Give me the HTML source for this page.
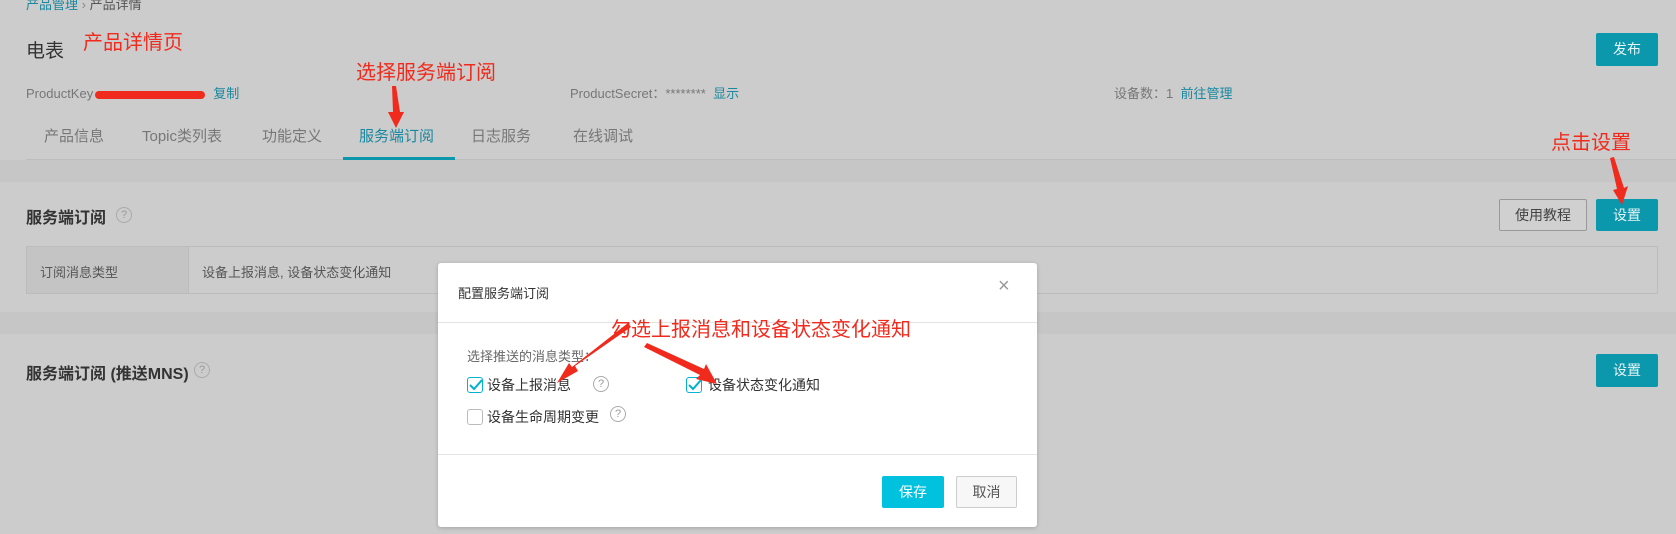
<!DOCTYPE html>
<html><head><meta charset="utf-8"><style>
*{margin:0;padding:0;box-sizing:border-box}
body{width:1676px;height:534px;overflow:hidden;background:#cccccc;font-family:"Liberation Sans","Noto Sans CJK SC",sans-serif;color:#333;position:relative}
.a{position:absolute;white-space:nowrap}
.btn{position:absolute;background:#0b97ac;color:#e6f4f6;font-size:14px;text-align:center;border-radius:2px}
.red{color:#f02b1d;font-size:20px}
.link{color:#1a88a0}
.cb{position:absolute;width:16px;height:16px;border:1px solid #bbb;border-radius:3px;background:#fff}
.cb.on{border-color:#00b3cf}
.q{position:absolute;width:16px;height:16px;border:1px solid #aaa;border-radius:50%;color:#999;font-size:11px;text-align:center;line-height:14px}
.tab{position:absolute;top:125px;font-size:15px;color:#777;white-space:nowrap}
</style></head><body>
<div class="a" style="left:26px;top:-6px;font-size:13px"><span class="link">产品管理</span> <span style="color:#888">›</span> <span style="color:#555">产品详情</span></div>
<div class="a" style="left:0;top:160px;width:1676px;height:22px;background:#c6c6c6"></div>
<div class="a" style="left:0;top:312px;width:1676px;height:22px;background:#c6c6c6"></div>
<div class="a" style="left:26px;top:36px;font-size:19px;color:#333">电表</div>
<div class="a red" style="left:83px;top:26px">产品详情页</div>
<div class="btn" style="left:1596px;top:33px;width:62px;height:33px;line-height:33px">发布</div>
<div class="a" style="left:26px;top:83px;font-size:13px;color:#777">ProductKey<span style="display:inline-block;width:110px;height:8px;background:#f02b1d;border-radius:4px;vertical-align:middle;margin:0 8px 0 2px"></span><span class="link">复制</span></div>
<div class="a" style="left:570px;top:83px;font-size:13px;color:#777">ProductSecret：******** &nbsp;<span class="link">显示</span></div>
<div class="a" style="left:1114px;top:83px;font-size:13px;color:#777">设备数：1 &nbsp;<span class="link">前往管理</span></div>
<div class="a red" style="left:356px;top:56px">选择服务端订阅</div>
<div class="tab" style="left:44px">产品信息</div>
<div class="tab" style="left:142px">Topic类列表</div>
<div class="tab" style="left:262px">功能定义</div>
<div class="tab" style="left:359px;color:#1a88a0">服务端订阅</div>
<div class="tab" style="left:471px">日志服务</div>
<div class="tab" style="left:573px">在线调试</div>
<div class="a" style="left:26px;top:159px;width:1650px;height:1px;background:#bdbdbd"></div>
<div class="a" style="left:343px;top:157px;width:112px;height:3px;background:#0b97ac"></div>
<div class="a red" style="left:1551px;top:126px">点击设置</div>
<div class="a" style="left:26px;top:204px;font-size:16px;font-weight:bold;color:#333">服务端订阅</div>
<div class="q" style="left:116px;top:207px">?</div>
<div class="a" style="left:1499px;top:199px;width:88px;height:32px;border:1px solid #999;border-radius:2px;background:#d0d0d0;font-size:14px;line-height:30px;text-align:center;color:#444">使用教程</div>
<div class="btn" style="left:1596px;top:199px;width:62px;height:32px;line-height:32px">设置</div>
<div class="a" style="left:26px;top:246px;width:1632px;height:48px;border:1px solid #bcbcbc"></div>
<div class="a" style="left:27px;top:247px;width:162px;height:46px;background:#c4c4c4;border-right:1px solid #bcbcbc"></div>
<div class="a" style="left:40px;top:262px;font-size:13px;color:#555">订阅消息类型</div>
<div class="a" style="left:202px;top:262px;font-size:13px;color:#555">设备上报消息, 设备状态变化通知</div>
<div class="a" style="left:26px;top:360px;font-size:16px;font-weight:bold;color:#333">服务端订阅 (推送MNS)</div>
<div class="q" style="left:194px;top:362px">?</div>
<div class="btn" style="left:1596px;top:354px;width:62px;height:33px;line-height:33px">设置</div>
<div class="a" style="left:438px;top:263px;width:599px;height:264px;background:#fff;border-radius:3px;box-shadow:0 1px 4px rgba(0,0,0,.2)">
 <div class="a" style="left:20px;top:20px;font-size:13px;color:#333">配置服务端订阅</div>
 <div class="a" style="left:560px;top:12px;font-size:20px;color:#999">×</div>
 <div class="a" style="left:0;top:59px;width:599px;height:1px;background:#e3e3e3"></div>
 <div class="a" style="left:29px;top:83px;font-size:13px;color:#666">选择推送的消息类型：</div>
 <div class="cb on" style="left:29px;top:114px"></div>
 <div class="a" style="left:49px;top:112px;font-size:14px;color:#333">设备上报消息</div>
 <div class="q" style="left:155px;top:113px">?</div>
 <div class="cb on" style="left:248px;top:114px"></div>
 <div class="a" style="left:270px;top:112px;font-size:14px;color:#333">设备状态变化通知</div>
 <div class="cb" style="left:29px;top:146px"></div>
 <div class="a" style="left:49px;top:144px;font-size:14px;color:#333">设备生命周期变更</div>
 <div class="q" style="left:172px;top:143px">?</div>
 <svg class="a" style="left:0;top:0" width="599" height="264">
 <path d="M32 122 l4 4 l8 -9" stroke="#00b3cf" stroke-width="2" fill="none"/>
 <path d="M251 122 l4 4 l8 -9" stroke="#00b3cf" stroke-width="2" fill="none"/>
 </svg>
 <div class="a" style="left:0;top:191px;width:599px;height:1px;background:#e3e3e3"></div>
 <div class="a" style="left:444px;top:213px;width:62px;height:32px;background:#00c1de;color:#fff;font-size:14px;line-height:32px;text-align:center;border-radius:2px">保存</div>
 <div class="a" style="left:518px;top:213px;width:61px;height:32px;border:1px solid #ccc;color:#555;font-size:14px;line-height:30px;text-align:center;border-radius:2px;background:#f7f7f7">取消</div>
</div>
<div class="a red" style="left:611px;top:313px">勾选上报消息和设备状态变化通知</div>
<svg class="a" style="left:0;top:0" width="1676" height="534">
<polygon points="392,86 396,86 400,112 404,112 396,128 388,112 393,112" fill="#f02b1d"/>
<polygon points="1610,158 1614,157 1624,188 1628,186 1622,205 1613,190 1617,189" fill="#f02b1d"/>
<polygon points="628,323 631,327 575,366 578,371 557,383 569,363 572,367" fill="#f02b1d"/>
<polygon points="644,347 647,343 704,369 706,364 717,384 696,379 700,375" fill="#f02b1d"/>
</svg>
</body></html>
